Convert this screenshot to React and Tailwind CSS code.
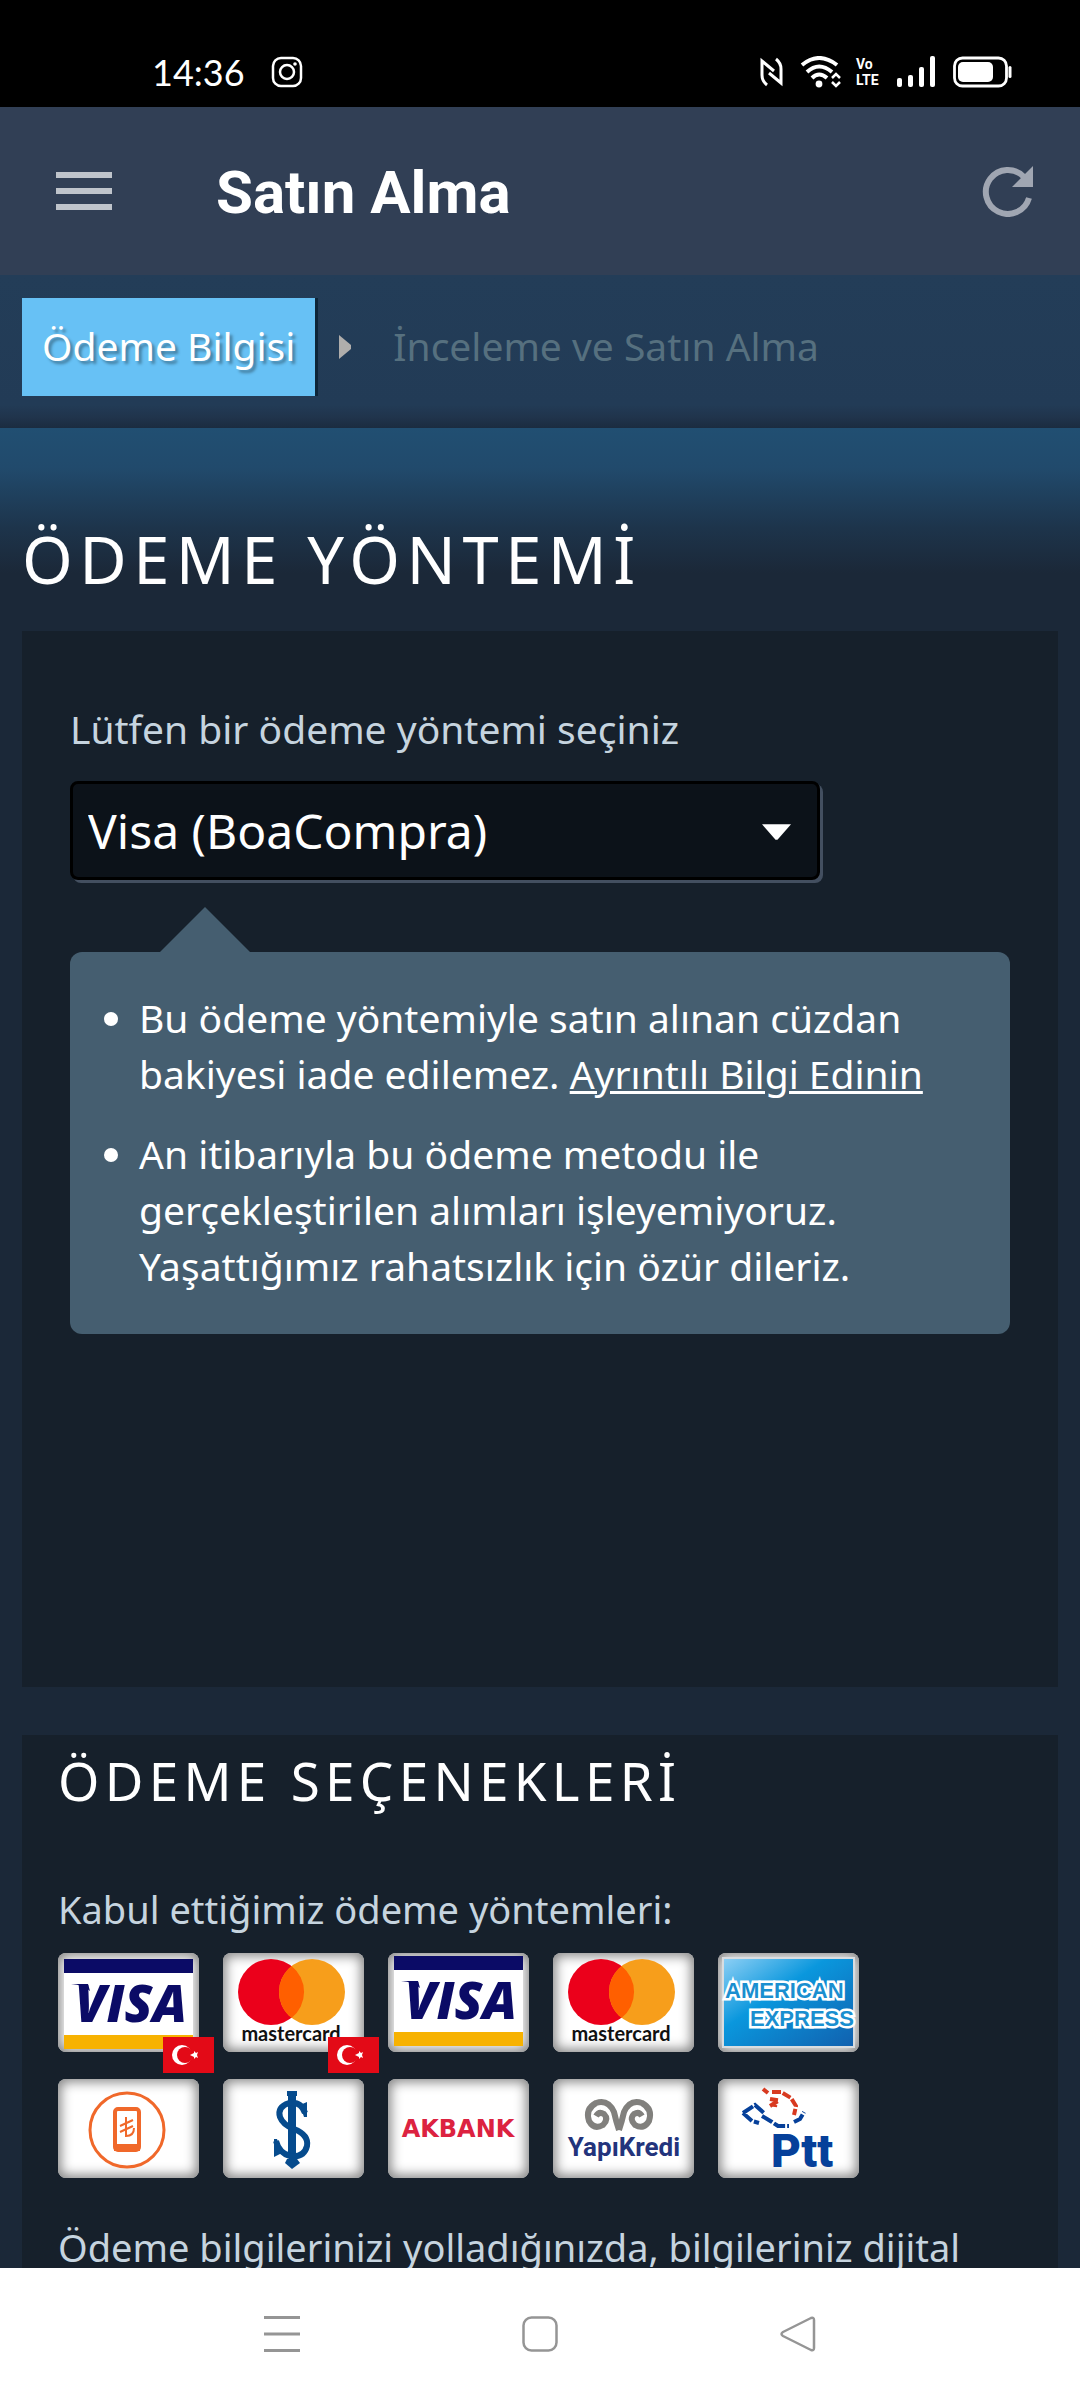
import { useState } from 'react';

function StatusBar() {
    return (
        <div className="h-[107px] shrink-0 bg-black text-white flex items-end justify-between pl-[152px] pr-[67px] pb-[13px]">
            <div className="flex items-center gap-[26px]">
                <span className="font-['Lato',sans-serif] text-[36px] leading-[44px]">14:36</span>
                <svg className="w-[32px] h-[32px]" viewBox="0 0 32 32" fill="none" stroke="currentColor" strokeWidth="2.5">
                    <rect x="2" y="2" width="28" height="28" rx="8" />
                    <circle cx="16" cy="16" r="7" />
                    <circle cx="24" cy="8" r="1.8" fill="currentColor" stroke="none" />
                </svg>
            </div>
            <div className="flex items-center h-[44px]">
                <svg className="w-[23px] h-[30px]" viewBox="0 0 23 30" fill="none" stroke="currentColor" strokeWidth="3">
                    <path d="M7 28 Q2 24 2 18 V4 L14 14" />
                    <path d="M16 2 Q21 6 21 12 V26 L9 16" />
                </svg>
                <svg className="w-[42px] h-[32px] ml-[17px]" viewBox="0 0 42 32" fill="none" stroke="currentColor" strokeWidth="4">
                    <path d="M2 9 Q19 -5 37 9" />
                    <path d="M7 16 Q19 5 32 16" />
                    <path d="M12 22 Q19 15 27 22" />
                    <circle cx="19" cy="28" r="3.4" fill="currentColor" stroke="none" />
                    <path d="M32 22 L36 18 L40 22 M32 26 L36 30 L40 26" strokeWidth="2.5" />
                </svg>
                <div className="ml-[14px] w-6 flex flex-col font-['Roboto',sans-serif] font-bold text-[14px] leading-[16px]">
                    <span>Vo</span>
                    <span>LTE</span>
                </div>
                <svg className="w-[38px] h-[32px] ml-[17px]" viewBox="0 0 38 32" fill="currentColor">
                    <rect x="0" y="22" width="5" height="9" rx="2" />
                    <rect x="11" y="19" width="5" height="12" rx="2" />
                    <rect x="22" y="11" width="5" height="20" rx="2" />
                    <rect x="33" y="0" width="5" height="31" rx="2" />
                </svg>
                <svg className="w-[60px] h-[32px] ml-[18px]" viewBox="0 0 60 32" fill="none">
                    <rect x="1.5" y="2" width="52" height="28" rx="8" stroke="currentColor" strokeWidth="2.8" />
                    <rect x="5" y="6" width="35" height="20" rx="5" fill="currentColor" />
                    <rect x="55.5" y="10" width="3" height="12" rx="1.5" fill="currentColor" />
                </svg>
            </div>
        </div>
    );
}

function Header() {
    return (
        <header className="h-[168px] shrink-0 bg-[#313f55] flex items-center pl-14 pr-[46px]">
            <button aria-label="Menü" className="flex flex-col gap-[10px] w-14">
                <span className="h-[6px] w-full bg-[#bfc4cb]" />
                <span className="h-[6px] w-full bg-[#bfc4cb]" />
                <span className="h-[6px] w-full bg-[#bfc4cb]" />
            </button>
            <h1 className="ml-[104px] pt-1 flex-1 text-white font-['Roboto',sans-serif] font-bold text-[60px] leading-[70px]">Satın Alma</h1>
            <button aria-label="Yenile">
                <svg className="w-[52px] h-[52px]" viewBox="0 0 52 52">
                    <path d="M42 12 A22 22 0 1 0 47 33" fill="none" stroke="#a0a6b2" strokeWidth="6" />
                    <path d="M51 1 V22 H30 Z" fill="#a0a6b2" />
                </svg>
            </button>
        </header>
    );
}

function Steps() {
    return (
        <nav className="h-[153px] shrink-0 flex items-start pt-[23px] px-[22px] text-[39px] leading-[52px] bg-[linear-gradient(#233d58_0px,#223b56_130px,#20344c_142px,#1b2c40_153px)]">
            <a href="#odeme" className="h-[98px] px-5 pb-[2px] flex items-center bg-[#67c1f5] text-white [text-shadow:3px_3px_3px_rgba(0,0,0,0.35)] shadow-[3px_0_0_0_#0d2538]">Ödeme Bilgisi</a>
            <svg className="w-3 h-6 ml-6 mt-[37px]" viewBox="0 0 12 24">
                <path d="M0 0 L12 10 V14 L0 24 Z" fill="#b0aeac" />
            </svg>
            <a href="#inceleme" className="h-[98px] ml-[42px] pb-[2px] flex items-center text-[#56707f]">İnceleme ve Satın Alma</a>
        </nav>
    );
}

function TurkishFlag() {
    return (
        <svg className="absolute left-[105px] top-[84px] w-[51px] h-9" viewBox="0 0 51 36">
            <rect width="51" height="36" fill="#e30a17" />
            <circle cx="19" cy="18" r="10" fill="#fff" />
            <circle cx="22" cy="18" r="8" fill="#e30a17" />
            <path d="M27 18 L31 16 L31 14 L33 16 L35 15 L34 18 L35 21 L33 20 L31 22 L31 20 Z" fill="#fff" />
        </svg>
    );
}

function VisaLogo({ tr }) {
    return (
        <svg viewBox={tr ? '0 0 141 99' : '0 3 141 99'} className="w-full h-full">
            <rect x="6" y="6" width="129" height="89" fill="#fff" />
            <rect x="6" y="6" width="129" height="14" fill="#0b0b66" />
            <rect x="6" y="82" width="129" height="14" fill="#f7b201" />
            <text x="73" y="69" textAnchor="middle" fontFamily="Open Sans" fontWeight="800" fontStyle="italic" fontSize="51" fill="#0b0b66">VISA</text>
            <path d="M13 31 H30 L32 38 Q26 32 13 31 Z" fill="#0b0b66" />
        </svg>
    );
}

function MastercardLogo() {
    return (
        <svg viewBox="0 0 141 99" className="w-full h-full">
            <circle cx="48" cy="39" r="33" fill="#eb001b" />
            <circle cx="89" cy="39" r="33" fill="#f79e1b" />
            <path d="M68.500 13.100 A33 33 0 0 1 68.500 64.900 A33 33 0 0 1 68.500 13.100 Z" fill="#ff5f00" />
            <text x="68" y="88" textAnchor="middle" fontFamily="Lato" fontWeight="700" fontSize="20" fill="#111">mastercard</text>
        </svg>
    );
}

function AmexLogo() {
    return (
        <svg viewBox="0 0 141 99" className="w-full h-full">
            <defs>
                <linearGradient id="amex" x1="0" y1="0" x2="1" y2="1">
                    <stop offset="0" stopColor="#8fd0f5" />
                    <stop offset="0.4" stopColor="#0a97dd" />
                    <stop offset="1" stopColor="#1160ae" />
                </linearGradient>
            </defs>
            <rect x="5" y="5" width="131" height="89" fill="url(#amex)" stroke="#d9dde0" strokeWidth="2" />
            <g fontFamily="Liberation Sans" fontWeight="700" fontSize="22" fill="#1a8fd0" stroke="#fff" strokeWidth="5" paintOrder="stroke">
                <text x="7" y="45">AMERICAN</text>
                <text x="32" y="73">EXPRESS</text>
            </g>
        </svg>
    );
}

function MobileLogo() {
    return (
        <svg viewBox="0 0 141 99" className="w-full h-full" fill="none" stroke="#f0682a">
            <circle cx="69" cy="51" r="37" strokeWidth="3" />
            <rect x="57" y="30" width="24" height="41" rx="3" strokeWidth="4" />
            <rect x="56" y="65" width="26" height="7" fill="#f0682a" stroke="none" />
            <path d="M68 38 V57 Q76 57 76 49 M62 47 L75 41 M62 53 L75 47" strokeWidth="2" />
        </svg>
    );
}

function IsbankLogo() {
    return (
        <svg viewBox="0 0 141 99" className="w-full h-full">
            <rect x="65" y="14" width="8" height="62" fill="#064b8d" />
            <rect x="64" y="12" width="10" height="5" fill="#064b8d" />
            <path d="M82 34 Q78 22 66 24 Q54 28 57 38 Q60 46 71 50 Q86 56 84 67 Q81 79 67 77 Q56 74 53 62" fill="none" stroke="#064b8d" strokeWidth="6" />
            <path d="M84 23 V38 H81 L77 26 Z M51 60 H54 L59 74 L51 78 Z" fill="#064b8d" />
            <path d="M64 80 L74 80 L77 84 L69 90 L62 84 Z" fill="#064b8d" />
        </svg>
    );
}

function AkbankLogo() {
    return (
        <svg viewBox="0 0 141 99" className="w-full h-full">
            <text x="70" y="58" textAnchor="middle" fontFamily="DejaVu Sans" fontWeight="700" fontSize="24" fill="#dc2240">AKBANK</text>
        </svg>
    );
}

function YapiKrediLogo() {
    return (
        <svg viewBox="0 0 141 99" className="w-full h-full">
            <g fill="none" stroke="#81807d" strokeWidth="6">
                <path d="M66 51 Q63 42 61 33 Q55 20 43 24 Q32 30 36 42 Q41 51 50 46 Q56 40 51 35 Q46 32 43 37" />
                <path d="M66 51 Q69 42 71 33 Q77 20 89 24 Q100 30 96 42 Q91 51 82 46 Q76 40 81 35 Q86 32 89 37" />
            </g>
            <text x="71" y="77" textAnchor="middle" fontFamily="Roboto" fontWeight="700" fontSize="26" fill="#23347c">YapıKredi</text>
        </svg>
    );
}

function PttLogo() {
    return (
        <svg viewBox="0 0 141 99" className="w-full h-full">
            <g fill="none" strokeWidth="4">
                <path d="M25 34 L37 26 L46 34 M25 34 L34 42 L41 44 M44 37 L54 43 L60 47 H71 M76 43 L82 40 L86 33" stroke="#06409a" strokeDasharray="12 2" />
                <path d="M45 10 L50 14 M54 13 H63 L73 19 L78 27 L76 36 M52 20 L58 21 L57 28 M52 27 L60 22" stroke="#d83a20" strokeDasharray="9 2" />
            </g>
            <text x="84" y="88" textAnchor="middle" fontFamily="Roboto" fontWeight="900" fontSize="46" fill="#06409a">Ptt</text>
        </svg>
    );
}

const cards = [
    { name: 'Visa (TR)', Logo: VisaLogo, tr: true },
    { name: 'Mastercard (TR)', Logo: MastercardLogo, tr: true },
    { name: 'Visa', Logo: VisaLogo },
    { name: 'Mastercard', Logo: MastercardLogo },
    { name: 'American Express', Logo: AmexLogo },
    { name: 'Mobil Ödeme', Logo: MobileLogo },
    { name: 'İş Bankası', Logo: IsbankLogo },
    { name: 'Akbank', Logo: AkbankLogo },
    { name: 'Yapı Kredi', Logo: YapiKrediLogo },
    { name: 'PTT', Logo: PttLogo },
];

function PaymentMethod() {
    const [method, setMethod] = useState('visa');

    return (
        <section className="bg-[#16202b] min-h-[1056px] px-12 pt-[70px]">
            <label htmlFor="method" className="block text-[39px] leading-[56px] text-[#c6d4df]">Lütfen bir ödeme yöntemi seçiniz</label>
            <div className="relative mt-[24px] w-[750px] max-w-full">
                <select
                    id="method"
                    value={method}
                    onChange={(e) => setMethod(e.target.value)}
                    className="appearance-none block w-full h-[99px] pl-[15px] pr-20 rounded-lg border-[3px] border-black bg-[#0c1219] text-white text-[48px] leading-[64px] shadow-[3px_3px_0_#434f60]"
                >
                    <option value="visa">Visa (BoaCompra)</option>
                    <option value="mastercard">Mastercard (BoaCompra)</option>
                </select>
                <svg className="absolute right-[29px] top-[43px] w-[29px] h-4 pointer-events-none" viewBox="0 0 30 16">
                    <path d="M0 0 H30 L16 16 H14 Z" fill="#fff" />
                </svg>
            </div>
            <svg className="block w-[90px] h-[45px] ml-[90px] mt-[27px]" viewBox="0 0 90 45">
                <path d="M45 0 L90 45 H0 Z" fill="#455e70" />
            </svg>
            <div className="bg-[#455e70] rounded-xl pt-[38px] pb-10 pl-[69px] pr-12 text-white text-[39px] leading-[56px]">
                <ul className="list-disc flex flex-col gap-6">
                    <li>
                        Bu ödeme yöntemiyle satın alınan cüzdan bakiyesi iade edilemez.{' '}
                        <a href="#bilgi" className="underline">Ayrıntılı Bilgi Edinin</a>
                    </li>
                    <li>An itibarıyla bu ödeme metodu ile gerçekleştirilen alımları işleyemiyoruz. Yaşattığımız rahatsızlık için özür dileriz.</li>
                </ul>
            </div>
        </section>
    );
}

function PaymentOptions() {
    return (
        <section className="mt-12 bg-[#16202b] px-9 pt-[10px] pb-10 text-[38px] leading-[56px] text-[#c6d4df]">
            <h2 className="text-white text-[53px] leading-[72px] tracking-widest">ÖDEME SEÇENEKLERİ</h2>
            <p className="mt-16">Kabul ettiğimiz ödeme yöntemleri:</p>
            <div className="mt-4 flex flex-wrap gap-x-6 gap-y-[27px] w-[801px] max-w-full">
                {cards.map(({ name, Logo, tr }) => (
                    <div key={name} role="img" aria-label={name} className="relative w-[141px] h-[99px] rounded-lg bg-white shadow-[inset_0_0_12px_3px_#858585]">
                        <Logo tr={tr} />
                        {tr && <TurkishFlag />}
                    </div>
                ))}
            </div>
            <p className="mt-[41px]">Ödeme bilgilerinizi yolladığınızda, bilgileriniz dijital</p>
        </section>
    );
}

function SystemNav() {
    return (
        <div className="h-[132px] shrink-0 bg-white flex items-center justify-center gap-[222px] text-[#959595]">
            <button aria-label="Son uygulamalar">
                <svg className="w-9 h-9" viewBox="0 0 36 36" stroke="currentColor" strokeWidth="3">
                    <path d="M0 1.500 H36 M0 18 H36 M0 34.500 H36" />
                </svg>
            </button>
            <button aria-label="Ana ekran">
                <svg className="w-9 h-9" viewBox="0 0 36 36" fill="none" stroke="currentColor" strokeWidth="2.5">
                    <rect x="1.500" y="1.500" width="33" height="33" rx="8" />
                </svg>
            </button>
            <button aria-label="Geri">
                <svg className="w-9 h-9" viewBox="0 0 36 36" fill="none" stroke="currentColor" strokeWidth="2.5" strokeLinejoin="round">
                    <path d="M3 16 L31 2 Q34 1 34 4 V32 Q34 35 31 34 L3 20 Q0 18 3 16 Z" />
                </svg>
            </button>
        </div>
    );
}

function App() {
    return (
        <div className="h-screen flex flex-col bg-[#1b2838] font-['Noto_Sans',sans-serif]">
            <StatusBar />
            <Header />
            <Steps />
            <main className="flex-1 min-h-0 overflow-y-auto [scrollbar-width:none] px-[22px] pt-[83px] bg-[linear-gradient(#214f72_0px,#214a6c_40px,#1d344b_100px,#1b2838_145px)]">
                <h2 className="text-white text-[65px] leading-[96px] pb-6 tracking-widest">ÖDEME YÖNTEMİ</h2>
                <PaymentMethod />
                <PaymentOptions />
            </main>
            <SystemNav />
        </div>
    );
}

export default App;
